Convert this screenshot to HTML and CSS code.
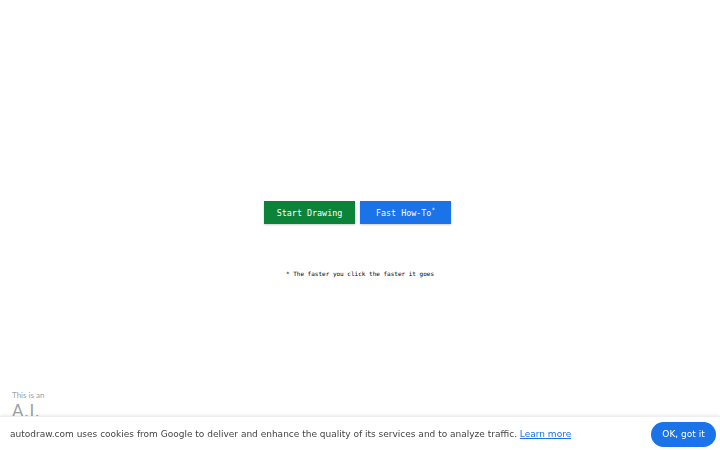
FILE: index.html
```html
<!DOCTYPE html>
<html>
<head>
    <link rel="stylesheet" href="styles.css">
</head>
<body>
    <div class="page">
        <div class="main">
            <div class="buttons">
                <button class="btn btn-start">Start Drawing</button>
                <button class="btn btn-howto">Fast How-To<sup>*</sup></button>
            </div>
            <p class="note">* The faster you click the faster it goes</p>
        </div>

        <div class="badge">
            <span class="badge-small">This is an</span>
            <span class="badge-big">A.I.</span>
        </div>
    </div>

    <div class="cookie-bar">
        <p class="cookie-text">autodraw.com uses cookies from Google to deliver and enhance the quality of its services and to analyze traffic. <a href="#">Learn more</a></p>
        <button class="cookie-ok">OK, got it</button>
    </div>
</body>
</html>
```

FILE: styles.css
```css
* {
    margin: 0;
    padding: 0;
    box-sizing: border-box;
}

body {
    font-family: 'DejaVu Sans Mono', monospace;
    background-color: #fff;
    height: 100vh;
    overflow: hidden;
}

.page {
    height: 100%;
    display: flex;
    flex-direction: column;
}

.main {
    padding-top: 201px;
    display: flex;
    flex-direction: column;
    align-items: center;
}

.buttons {
    display: flex;
    gap: 5px;
    margin-left: -5px;
}

.btn {
    width: 91px;
    height: 23px;
    border: none;
    color: #fff;
    font-family: 'DejaVu Sans Mono', monospace;
    font-size: 8.4px;
    box-shadow: 0 1px 2px rgba(0, 0, 0, 0.2);
    cursor: pointer;
}

.btn sup {
    font-size: 6px;
    vertical-align: 4px;
    line-height: 0;
}

.btn-start {
    background-color: #0b843a;
}

.btn-howto {
    background-color: #1a73e8;
}

.note {
    margin-top: 46px;
    font-size: 6px;
    color: #000;
}

.badge {
    margin-top: auto;
    margin-bottom: 31px;
    padding-left: 12px;
    display: flex;
    flex-direction: column;
    font-family: 'Lato', sans-serif;
    color: #a0a0a0;
}

.badge-small {
    font-size: 8px;
}

.badge-big {
    font-size: 17px;
    line-height: 16px;
    letter-spacing: 1px;
    margin-top: 3px;
}

/* cookie notice pinned to the bottom */
.cookie-bar {
    position: fixed;
    left: 0;
    right: 0;
    bottom: 0;
    height: 34px;
    background-color: #fff;
    box-shadow: 0 -1px 3px rgba(0, 0, 0, 0.08);
    border-top: 1px solid #eee;
    display: flex;
    align-items: center;
    justify-content: space-between;
    padding: 0 4px 0 10px;
    font-family: 'DejaVu Sans', sans-serif;
}

.cookie-text {
    font-size: 9px;
    color: #444;
}

.cookie-text a {
    color: #1a73e8;
}

.cookie-ok {
    width: 65px;
    height: 25px;
    border: none;
    border-radius: 13px;
    background-color: #1a73e8;
    color: #fff;
    font-family: 'DejaVu Sans', sans-serif;
    font-size: 9px;
    margin-top: 1px;
}
```
